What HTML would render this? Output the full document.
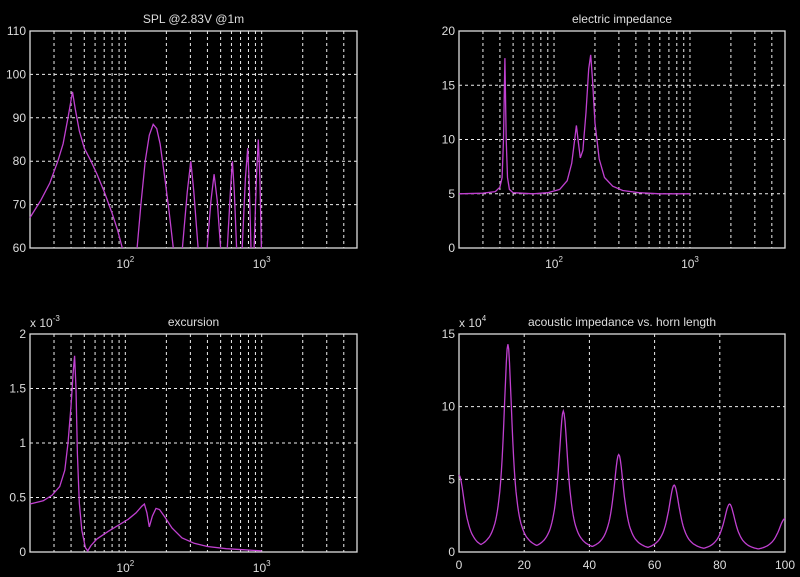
<!DOCTYPE html>
<html><head><meta charset="utf-8"><style>
html,body{margin:0;padding:0;background:#000;width:800px;height:577px;overflow:hidden}
svg{display:block}
text{font-family:"Liberation Sans",Arial,sans-serif;fill:#ddd;font-size:12px}
</style></head><body>
<svg id="s" width="800" height="577" xmlns="http://www.w3.org/2000/svg"></svg>
<script>
const S=document.getElementById('s');let h='';
const L=Math.log10;
function logx(x0,x1){return f=>x0+(L(f)-L(20))/(L(5000)-L(20))*(x1-x0);}
function lin(a,b,p0,p1){return v=>p0+(v-a)/(b-a)*(p1-p0);}
function axes(x0,y0,x1,y1,xs,ys,title){
 for(const gx of xs)h+=`<line x1="${gx}" y1="${y0}" x2="${gx}" y2="${y1}" stroke="#eee" stroke-width="1" stroke-dasharray="3,3"/>`;
 for(const gy of ys)h+=`<line x1="${x0}" y1="${gy}" x2="${x1}" y2="${gy}" stroke="#eee" stroke-width="1" stroke-dasharray="3,3"/>`;
 h+=`<rect x="${x0}" y="${y0}" width="${x1-x0}" height="${y1-y0}" fill="none" stroke="#ddd" stroke-width="1.3"/>`;
 h+=`<text x="${(x0+x1)/2}" y="${y0-8}" text-anchor="middle" font-size="11.5">${title}</text>`;
}
function logGrid(X){let a=[];for(const d of [10,100,1000])for(let k=1;k<10;k++){const f=d*k;if(f>20&&f<5000)a.push(X(f));}return a;}
function curve(pts){h+=`<polyline fill="none" stroke="#c040d0" stroke-width="1.3" points="${pts.map(p=>p[0].toFixed(1)+','+p[1].toFixed(1)).join(' ')}"/>`;}
function interp(data,X,Y){return data.map(([f,v])=>[X(f),Y(v)]);}
function ylab(x,y,t){h+=`<text x="${x}" y="${y+4}" text-anchor="end">${t}</text>`;}
function dec(x,y,e){h+=`<text x="${x}" y="${y}" text-anchor="middle">10<tspan dy="-6" font-size="8">${e}</tspan></text>`;}
// SPL
{const x0=30,x1=357,y0=31,y1=248;const X=logx(x0,x1),Y=lin(60,110,y1,y0);
 axes(x0,y0,x1,y1,logGrid(X),[70,80,90,100].map(Y),'SPL @2.83V @1m');
 [60,70,80,90,100,110].forEach(v=>ylab(26,Y(v),v));dec(X(100),268,2);dec(X(1000),268,3);
 const segs=[[[20,67],[24,71],[28,75],[32,80],[35,84],[38,90],[41,96],[43,92],[46,87],[50,83],[56,80],[62,77],[70,73],[80,68],[88,64],[95,60]],
 [[122,60],[130,70],[140,80],[150,86],[160,88.5],[170,87.5],[180,84],[195,76],[210,68],[225,60]],[[262,60],[285,73],[302,80],[318,73],[342,60]],[[398,60],[425,71],[448,77],[472,71],[500,60]],
 [[560,60],[590,73],[610,80],[630,73],[655,60]],[[720,60],[760,76],[790,83],[810,75],[835,60]],[[880,60],[915,76],[945,85],[970,76],[995,60]]];
 segs.forEach(s=>curve(interp(s,X,Y)));}
// impedance
{const x0=459,x1=785,y0=31,y1=248;const X=logx(x0,x1),Y=lin(0,20,y1,y0);
 axes(x0,y0,x1,y1,logGrid(X),[5,10,15].map(Y),'electric impedance');
 [0,5,10,15,20].forEach(v=>ylab(455,Y(v),v));dec(X(100),268,2);dec(X(1000),268,3);
 curve(interp([[20,5],[30,5.05],[37,5.2],[40,5.6],[41.5,6.5],[42.5,10],[43.5,17.5],[44.5,10],[45.5,6.5],[47,5.4],[50,5.1],[70,5],[90,5.1],[110,5.4],[125,6.2],[135,7.8],[142,10],[146,11.3],[150,10],[156,8.3],[163,9],[172,12.5],[180,16.5],[186,17.8],[192,15.5],[200,11.5],[215,8.2],[235,6.5],[270,5.7],[320,5.3],[420,5.1],[600,5],[1000,5]],X,Y));}
// excursion
{const x0=30,x1=357,y0=334,y1=552;const X=logx(x0,x1),Y=lin(0,2,y1,y0);
 axes(x0,y0,x1,y1,logGrid(X),[0.5,1,1.5].map(Y),'excursion');
 [[0,'0'],[0.5,'0.5'],[1,'1'],[1.5,'1.5'],[2,'2']].forEach(v=>ylab(26,Y(v[0]),v[1]));
 h+=`<text x="30" y="327">x 10<tspan dy="-6" font-size="8">-3</tspan></text>`;
 dec(X(100),572,2);dec(X(1000),572,3);
 curve(interp([[20,0.44],[25,0.47],[29,0.52],[33,0.6],[36,0.75],[38,1.0],[40,1.35],[41.5,1.65],[42.5,1.8],[43.5,1.5],[44.5,0.9],[46,0.45],[48,0.2],[51,0.04],[53,0.01],[56,0.06],[62,0.12],[75,0.19],[90,0.25],[105,0.3],[120,0.36],[132,0.42],[138,0.44],[144,0.36],[150,0.23],[158,0.33],[168,0.4],[178,0.39],[195,0.32],[220,0.22],[260,0.13],[320,0.08],[400,0.05],[550,0.03],[750,0.02],[1000,0.01]],X,Y));}
// acoustic
{const x0=459,x1=785,y0=334,y1=552;const X=lin(0,100,x0,x1),Y=lin(0,15,y1,y0);
 axes(x0,y0,x1,y1,[20,40,60,80].map(X),[5,10].map(Y),'acoustic impedance vs. horn length');
 [0,5,10,15].forEach(v=>ylab(455,Y(v),v));
 h+=`<text x="459" y="327">x 10<tspan dy="-6" font-size="8">4</tspan></text>`;
 [0,20,40,60,80,100].forEach(v=>h+=`<text x="${X(v)}" y="569" text-anchor="middle">${v}</text>`);
 const pk=[[0,5.3,2.2],[15,14.3,1.6],[32,9.7,1.8],[49,6.7,2.0],[66,4.6,2.2],[83,3.3,2.3],[100,2.3,2.6]];
 let pts=[];for(let x=0;x<=100;x+=0.25){let v=0.05;pk.forEach(([p,a,w])=>v=Math.max(v,a/(1+((x-p)/w)**2)));pts.push([X(x),Y(v)]);}curve(pts);}
S.innerHTML=h;
</script>
</body></html>
